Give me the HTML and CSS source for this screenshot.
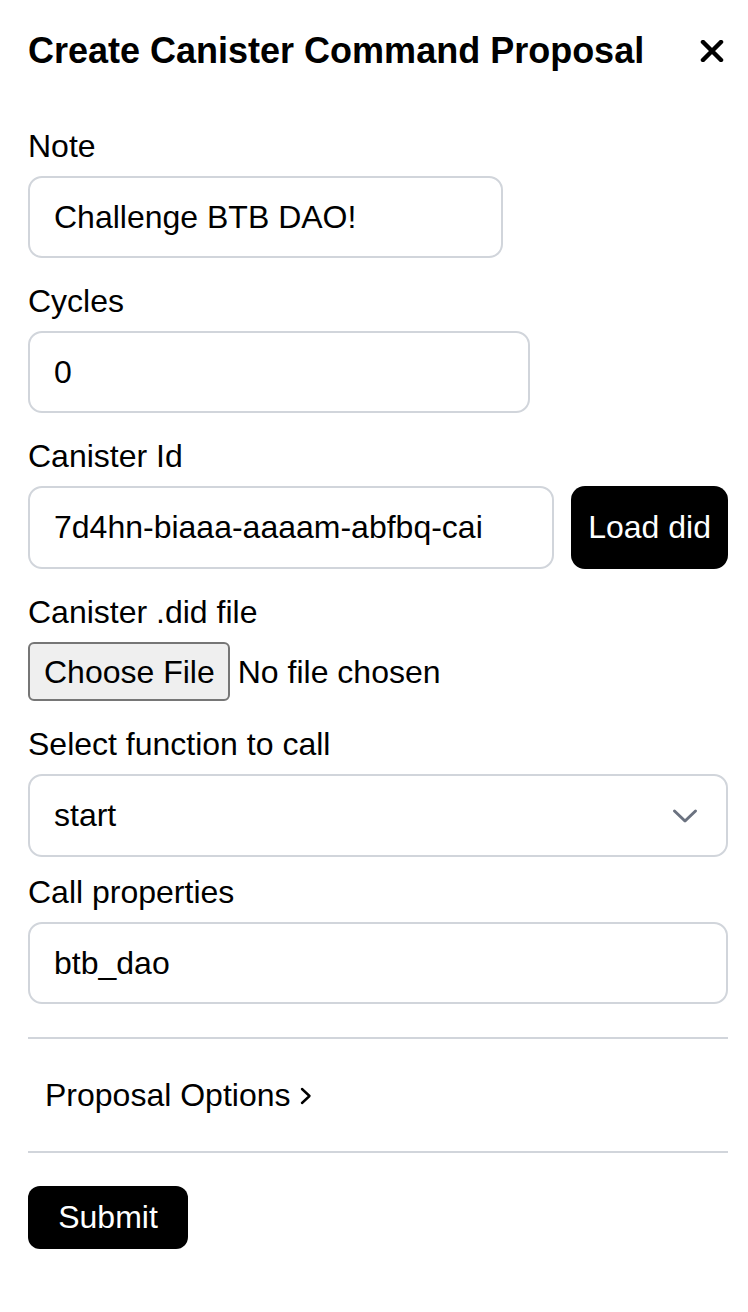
FILE: index.html
```html
<!DOCTYPE html>
<html lang="en">
<head>
<meta charset="utf-8">
<title>Create Canister Command Proposal</title>
<link rel="stylesheet" href="styles.css">
</head>
<body>
<div class="modal">
  <div class="modal-header">
    <h1 class="modal-title">Create Canister Command Proposal</h1>
    <button class="close-btn" aria-label="Close">
      <svg width="24" height="22" viewBox="0 0 24 22"><path d="M3 2 L21 20 M21 2 L3 20" stroke="#000" stroke-width="4.5" stroke-linecap="round"/></svg>
    </button>
  </div>

  <form class="form">
    <div class="field">
      <label class="field-label">Note</label>
      <input class="text-input input-note" type="text" value="Challenge BTB DAO!">
    </div>

    <div class="field">
      <label class="field-label">Cycles</label>
      <input class="text-input input-cycles" type="text" value="0">
    </div>

    <div class="field">
      <label class="field-label">Canister Id</label>
      <div class="row">
        <input class="text-input input-grow" type="text" value="7d4hn-biaaa-aaaam-abfbq-cai">
        <button type="button" class="btn-dark btn-load">Load did</button>
      </div>
    </div>

    <div class="field">
      <label class="field-label">Canister .did file</label>
      <div class="file-row">
        <span class="file-btn">Choose File</span>
        <span class="file-status">No file chosen</span>
      </div>
    </div>

    <div class="field">
      <label class="field-label">Select function to call</label>
      <div class="select">
        <span class="select-value">start</span>
        <svg class="select-arrow" width="26" height="16" viewBox="0 0 26 16"><path d="M2.5 3 L13 13 L23.5 3" fill="none" stroke="#6b7280" stroke-width="3" stroke-linecap="round" stroke-linejoin="round"/></svg>
      </div>
    </div>

    <div class="field field-tight">
      <label class="field-label">Call properties</label>
      <input class="text-input input-full" type="text" value="btb_dao">
    </div>

    <div class="options">
      <span>Proposal Options</span>
      <svg class="options-chevron" width="12" height="18" viewBox="0 0 12 18"><path d="M2 2 L9.5 9 L2 16" fill="none" stroke="#000" stroke-width="2.4" stroke-linecap="round" stroke-linejoin="round"/></svg>
    </div>

    <button type="button" class="btn-dark btn-submit">Submit</button>
  </form>
</div>
</body>
</html>
```

FILE: styles.css
```css
* { box-sizing: border-box; }

html, body {
  margin: 0;
  background: #ffffff;
}

body {
  font-family: "Liberation Sans", Arial, Helvetica, sans-serif;
  color: #000;
  font-size: 32px;
  padding: 31px 20px 0 28px;
}

.modal-header {
  display: flex;
  align-items: center;
  justify-content: space-between;
  height: 40px;
  margin-bottom: 57px;
}

.modal-title {
  margin: 0;
  font-size: 36px;
  font-weight: 700;
  line-height: 40px;
}

.close-btn {
  border: 0;
  background: none;
  padding: 0;
  margin-right: 4px;
  display: flex;
}

.form {
  display: flex;
  flex-direction: column;
}

.field + .field { margin-top: 25px; }
.field + .field.field-tight { margin-top: 17px; }

.field-label {
  display: block;
  font-size: 32px;
  line-height: 36px;
  margin-bottom: 12px;
}

.text-input {
  display: block;
  height: 82px;
  border: 2px solid #d1d5db;
  border-radius: 14px;
  padding: 0 24px;
  font-family: inherit;
  font-size: 32px;
  color: #000;
  background: #fff;
  outline: none;
}

.input-note { width: 475px; }
.input-cycles { width: 502px; }
.input-full { width: 100%; }

.row {
  display: flex;
  gap: 17px;
}

.input-grow {
  flex: 1;
  min-width: 0;
  height: 83px;
}

.btn-dark {
  background: #000;
  color: #fff;
  border: 0;
  font-family: inherit;
  font-size: 32px;
}

.btn-load {
  height: 83px;
  padding: 0 17px;
  border-radius: 14px;
}

.file-row {
  display: flex;
  align-items: center;
  gap: 8px;
}

.file-btn {
  display: inline-flex;
  align-items: center;
  height: 59px;
  padding: 2px 13px 0 14px;
  background: #efefef;
  border: 2px solid #767676;
  border-radius: 6px;
}

.file-status { padding-top: 2px; }

.select {
  display: flex;
  align-items: center;
  justify-content: space-between;
  height: 83px;
  border: 2px solid #d1d5db;
  border-radius: 14px;
  padding: 0 28px 0 24px;
}

.options {
  margin-top: 33px;
  border-top: 2px solid #d1d5db;
  border-bottom: 2px solid #d1d5db;
  height: 116px;
  padding-left: 17px;
  display: flex;
  align-items: center;
  gap: 10px;
}

.options-chevron { margin-top: 2px; }

.btn-submit {
  align-self: flex-start;
  margin-top: 33px;
  height: 63px;
  width: 160px;
  border-radius: 12px;
}
```
